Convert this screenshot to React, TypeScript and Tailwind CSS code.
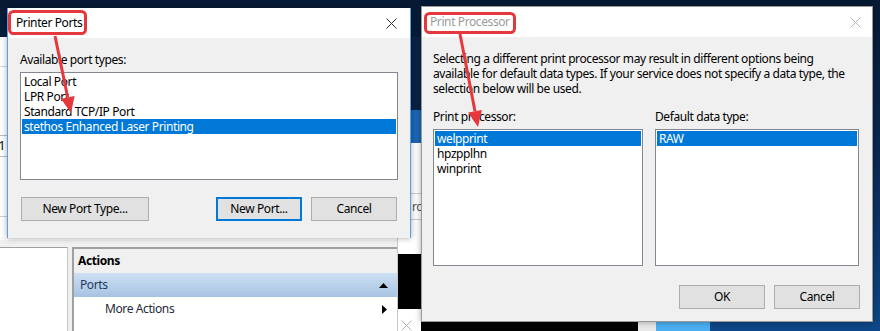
const CloseIcon = ({ color }: { color: string }) => (
  <svg width="11" height="11" viewBox="0 0 11 11" fill="none" stroke={color} strokeWidth={1}>
    <path d="M0.5 0.5 10.5 10.5M10.5 0.5 0.5 10.5" />
  </svg>
);

const Button = ({ label, width, primary }: { label: string; width: string; primary?: boolean }) => (
  <div
    className={`${width} h-[24px] flex items-center justify-center bg-[#e1e1e1] text-black ${
      primary ? "border-2 border-[#0078d7]" : "border border-[#adadad]"
    }`}
  >
    {label}
  </div>
);

const ListRow = ({ label, selected }: { label: string; selected?: boolean }) => (
  <div className={`h-[15px] leading-[15px] px-[2px] whitespace-nowrap ${selected ? "bg-[#0078d7] text-white" : "text-black"}`}>
    {label}
  </div>
);

const PrinterPorts = () => (
  <div className="absolute left-[7px] top-[8px] w-[404px] h-[230px] flex flex-col border-x border-[#5aa0e0] shadow-[0_0_6px_rgba(0,0,0,0.35)]">
    <div className="h-[30px] bg-white flex items-center justify-between pl-[8px] pr-[13px]">
      <span className="text-black">Printer Ports</span>
      <CloseIcon color="#333" />
    </div>
    <div className="flex-1 bg-[#f0f0f0] flex flex-col pt-[14px] px-[12px]">
      <div className="h-[15px] leading-[15px]">Available port types:</div>
      <div className="mt-[5px] h-[108px] w-[378px] bg-white border border-[#828790] p-[1px]">
        <ListRow label="Local Port" />
        <ListRow label="LPR Port" />
        <ListRow label="Standard TCP/IP Port" />
        <ListRow label="stethos Enhanced Laser Printing" selected />
      </div>
      <div className="mt-[17px] flex pl-[1px] pr-[1px]">
        <Button label="New Port Type..." width="w-[128px]" />
        <div className="ml-auto flex gap-[9px]">
          <Button label="New Port..." width="w-[86px]" primary />
          <Button label="Cancel" width="w-[86px]" />
        </div>
      </div>
    </div>
  </div>
);

const PrintProcessor = () => (
  <div className="absolute left-[421px] top-[6px] w-[452px] h-[316px] flex flex-col border border-[#9a9a9a] shadow-[0_0_6px_rgba(0,0,0,0.35)]">
    <div className="h-[30px] bg-white flex items-center justify-between pl-[8px] pr-[11px]">
      <span className="text-[#9b9b9b]">Print Processor</span>
      <CloseIcon color="#b5b5b5" />
    </div>
    <div className="flex-1 bg-[#f0f0f0] flex flex-col pt-[14px] pl-[11px] pr-[12px]">
      <div className="leading-[15px] whitespace-nowrap text-black">
        <div>Selecting a different print processor may result in different options being</div>
        <div>available for default data types. If your service does not specify a data type, the</div>
        <div>selection below will be used.</div>
      </div>
      <div className="mt-[13px] flex gap-[12px]">
        <div className="w-[210px] flex flex-col">
          <div className="h-[15px] leading-[15px]">Print processor:</div>
          <div className="mt-[5px] h-[137px] bg-white border border-[#828790] p-[1px]">
            <ListRow label="welpprint" selected />
            <ListRow label="hpzpplhn" />
            <ListRow label="winprint" />
          </div>
        </div>
        <div className="w-[204px] flex flex-col">
          <div className="h-[15px] leading-[15px]">Default data type:</div>
          <div className="mt-[5px] h-[137px] bg-white border border-[#828790] p-[1px]">
            <ListRow label="RAW" selected />
          </div>
        </div>
      </div>
      <div className="mt-[19px] flex justify-end gap-[9px]">
        <Button label="OK" width="w-[86px]" />
        <Button label="Cancel" width="w-[86px]" />
      </div>
    </div>
  </div>
);

// MMC console window sitting behind the dialogs
const Console = () => (
  <div className="absolute left-0 top-[37px] w-[421px] h-[294px] flex flex-col bg-white">
    <div className="h-[201px] flex justify-between">
      <div className="w-[7px] flex flex-col overflow-hidden">
        <div className="h-[30px] border-b border-[#d9d9d9]" />
        <div className="mt-[68px] h-[22px] border-y border-[#bdbdbd] leading-[20px] text-black whitespace-nowrap -ml-[8px]">01</div>
        <div className="mt-[59px] border-b border-[#d0d0d0]" />
      </div>
      <div className="w-[10px] flex flex-col overflow-hidden">
        <div className="h-[73px] bg-[#0a2245]" />
        <div className="h-[33px] bg-[#1b67b8]" />
        <div className="mt-[50px] h-[27px] border-y border-[#cfcfcf] leading-[25px] text-[#555] whitespace-nowrap pl-[1px]">rc</div>
      </div>
    </div>
    <div className="flex-1 flex">
      <div className="w-[397px] flex flex-col bg-[#f0f0f0]">
        <div className="h-[3px] bg-[#fafafa]" />
        <div className="h-[7px]" />
        <div className="flex-1 flex">
          <div className="w-[68px] bg-white border-r border-[#c8c8c8] border-t border-t-[#a0a0a0]" />
          <div className="w-[4px]" />
          <div className="flex-1 flex flex-col border-l-2 border-t-2 border-[#a0a0a0]">
            <div className="h-[24px] flex items-center pl-[4px] font-bold text-black bg-[#f0f0f0]">Actions</div>
            <div className="h-[24px] flex items-center justify-between pl-[6px] pr-[9px] bg-gradient-to-b from-[#cddff2] to-[#a7c3e2] text-[#1e3a5c]">
              <span>Ports</span>
              <svg width="9" height="5" viewBox="0 0 9 5">
                <path d="M0 5 4.5 0 9 5Z" fill="#000" />
              </svg>
            </div>
            <div className="h-[24px] flex items-center justify-between pl-[31px] pr-[10px] bg-white text-[#1e2a3a]">
              <span>More Actions</span>
              <svg width="5" height="9" viewBox="0 0 5 9">
                <path d="M0 0 5 4.5 0 9Z" fill="#000" />
              </svg>
            </div>
            <div className="flex-1 bg-white" />
          </div>
        </div>
      </div>
      <div className="flex-1 flex flex-col border-l border-[#c8c8c8]">
        <div className="h-[17px] bg-white" />
        <div className="h-[55px] bg-black" />
        <div className="flex-1 bg-white flex justify-start pl-[3px] pt-[11px]">
          <CloseIcon color="#b0b0b0" />
        </div>
      </div>
    </div>
  </div>
);

const Annotations = () => (
  <svg className="absolute inset-0 pointer-events-none" width="880" height="331" viewBox="0 0 880 331">
    <g stroke="#e5373c" strokeWidth={3} fill="none">
      <rect x="9.5" y="11.5" width="76" height="22" rx="4" />
      <rect x="425.5" y="13.5" width="89" height="19" rx="4" />
      <path d="M55 36 67.7 97.3" />
      <path d="M460 34 475 111.3" />
    </g>
    <g fill="#e5373c">
      <path d="M71 113 74.6 95.9 60.9 98.7Z" />
      <path d="M478 127 481.9 110 468.1 112.6Z" />
    </g>
  </svg>
);

export default function App() {
  return (
    <div className="relative w-[880px] h-[331px] overflow-hidden bg-gradient-to-b from-[#071a35] via-[#0a2a55] to-[#0e4788] font-['Segoe_UI','Noto_Sans',sans-serif] text-[12px] tracking-[-0.4px]">
      <Console />
      <div className="absolute left-[421px] top-[322px] flex h-[9px]">
        <div className="w-[217px] bg-black" />
        <div className="w-[18px] bg-[#e8e8e8]" />
        <div className="w-[54px] bg-[#4aaef0]" />
      </div>
      <PrinterPorts />
      <PrintProcessor />
      <Annotations />
    </div>
  );
}
